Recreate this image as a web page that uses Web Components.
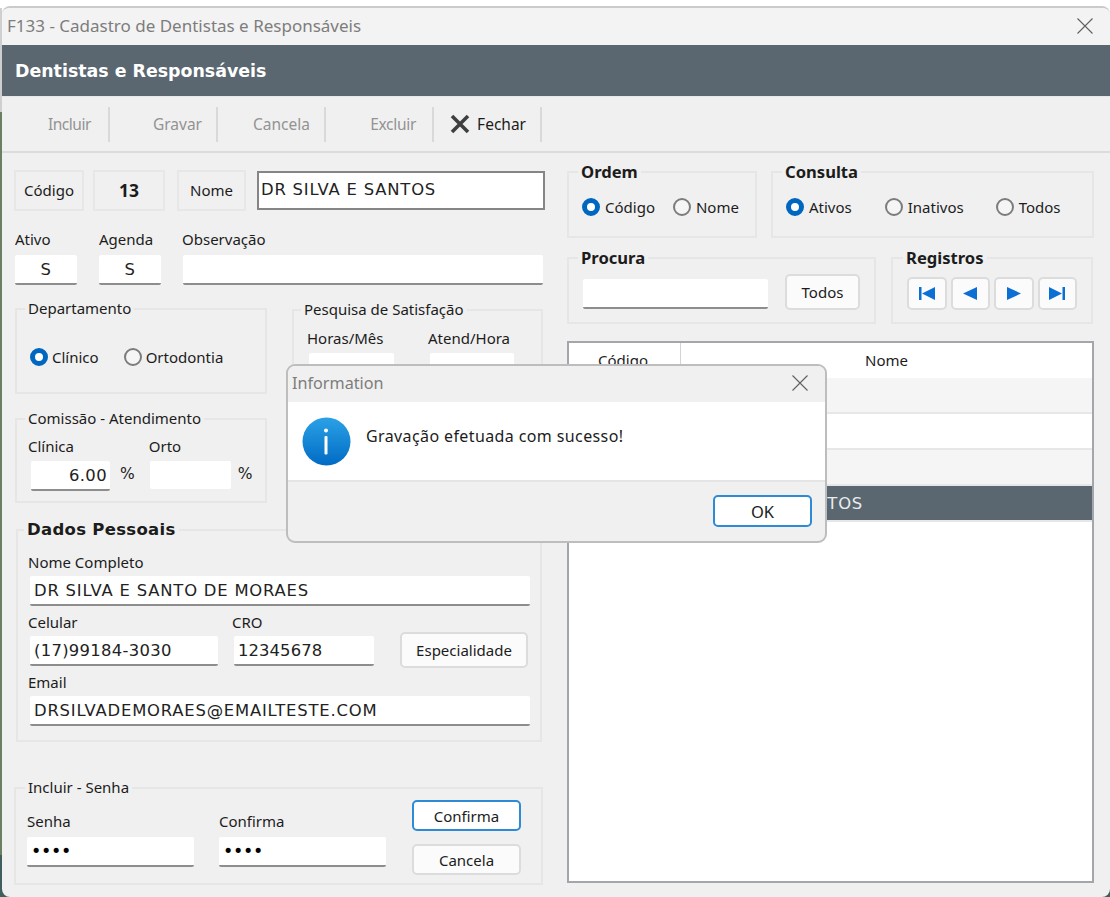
<!DOCTYPE html>
<html lang="pt">
<head>
<meta charset="utf-8">
<title>F133</title>
<style>
    html, body { margin: 0; height: 897px; overflow: hidden; }
    body {
        background:
            linear-gradient(#fff 8px, #cfcfcf 8px, #cfcfcf 112px, #6b8062 112px, #6b8062 855px, #3f5f5e 855px) 0 0 / 2px 100% no-repeat,
            linear-gradient(#3f5f5e, #3f5f5e) 0 100% / 100% 12px no-repeat,
            #fff;
        font-family: "Noto Sans", sans-serif;
    }
</style>
</head>
<body>
<x-app></x-app>
<script>
const define = (name, html, Base = HTMLElement) => {
    const template = document.createElement('template');
    template.innerHTML = html;
    customElements.define(name, class extends Base {
        constructor() {
            super();
            this.attachShadow({ mode: 'open' });
            this.shadowRoot.appendChild(template.content.cloneNode(true));
        }
        connectedCallback() {
            this.shadowRoot.querySelectorAll('[data-attr]').forEach(el => {
                el.textContent = this.getAttribute(el.dataset.attr) || '';
            });
        }
    });
};

// title bar of a window, also used by the dialog
define('x-titlebar', `<style>
    :host { display: flex; align-items: center; justify-content: space-between; box-sizing: border-box; padding-bottom: 2px; background: #f3f3f3; color: #7d7d7d; font: 16.2px "Noto Sans", sans-serif; }
    svg { display: block; }
</style>
<span data-attr="title"></span>
<svg width="16" height="16" viewBox="0 0 16 16" fill="none" stroke="#5f5f5f" stroke-width="1.1"><path d="M.5.5l15 15M15.5.5l-15 15"/></svg>`);

define('x-tool', `<style>
    :host { display: flex; align-items: center; justify-content: flex-end; box-sizing: border-box; width: 108px; height: 35px; padding: 0 14px 1px 0; border-right: 2px solid #d9d9d9; color: #939393; font: 15.5px "Noto Sans", sans-serif; }
    :host([active]) { color: #1c1c1c; }
    ::slotted(svg) { margin-right: 7px; }
</style>
<slot name="icon"></slot><slot></slot>`);

define('x-box', `<style>
    :host { display: flex; align-items: center; justify-content: center; box-sizing: border-box; height: 41px; padding-bottom: 2px; border: 2px solid #e7e7e7; color: #1c1c1c; font: 15px "Noto Sans", sans-serif; }
    :host([strong]) { font-weight: 700; font-size: 17.5px; }
</style>
<slot></slot>`);

define('x-input', `<style>
    :host { display: flex; align-items: center; box-sizing: border-box; height: 30px; padding: 0 4px; background: #fff; border-bottom: 2px solid #8d8d8d; border-radius: 2px; color: #222; font: 16.4px "DejaVu Sans", sans-serif; letter-spacing: .8px; white-space: nowrap; }
    :host([center]) { justify-content: center; }
    :host([right]) { justify-content: flex-end; padding-right: 3px; letter-spacing: .4px; }
    :host([flat]) { height: 28px; border-bottom: 0; margin-bottom: 2px; }
    :host([boxed]) { align-items: flex-start; padding: 7px 2px 0; height: 39px; border: 2px solid #858585; border-radius: 0; }
    :host([secret]) { color: #000; font-size: 17.5px; letter-spacing: -.3px; }
</style>
<slot></slot>`);

define('x-field', `<style>
    :host { display: flex; flex-direction: column; gap: var(--gap, 4px); }
    span { height: 18px; color: #1c1c1c; font: 15px/16px "Noto Sans", sans-serif; white-space: nowrap; }
    ::slotted(x-input) { margin-left: var(--inset, 0); }
</style>
<span data-attr="label"></span>
<slot></slot>`);

define('x-group', `<style>
    :host { display: block; box-sizing: border-box; }
    fieldset { box-sizing: border-box; height: 100%; min-width: 0; margin: 0; padding: var(--pad, 0 12px); border: 2px solid #e6e6e6; }
    legend { height: 18px; margin-left: var(--legend-x, -3px); padding: 0 3px; color: #1c1c1c; font: 15px/16px "Noto Sans", sans-serif; white-space: nowrap; }
    :host([strong]) legend { font: 700 16.6px/18px "Noto Sans", sans-serif; }
    :host([wide]) legend { font: 700 16.5px/18px "DejaVu Sans", sans-serif; letter-spacing: .3px; }
</style>
<fieldset><legend data-attr="legend"></legend><slot></slot></fieldset>`);

define('x-radio', `<style>
    :host { display: inline-flex; align-items: center; gap: var(--radio-gap, 5px); height: 20px; color: #1c1c1c; font: 15px "Noto Sans", sans-serif; white-space: nowrap; }
    i { box-sizing: border-box; width: 18px; height: 18px; border: 2px solid #7c7c7c; border-radius: 50%; background: #f5f5f5; }
    :host([checked]) i { border: 5px solid #0067c0; background: #fff; }
</style>
<i></i><slot></slot>`);

define('x-btn', `<style>
    :host { display: flex; align-items: center; justify-content: center; box-sizing: border-box; height: 31px; background: #fbfbfb; border: 2px solid #dcdcdc; border-radius: 5px; color: #1c1c1c; font: 15px "Noto Sans", sans-serif; white-space: nowrap; }
    :host([focus]) { background: #fff; border-color: #2f8ad6; }
</style>
<slot></slot>`);

define('x-row', `<style>
    :host { display: grid; grid-template-columns: 111px 1fr; align-items: center; box-sizing: border-box; height: 36px; border-bottom: 2px solid #e7e7e7; background: #fff; color: #222; font: 16.4px "DejaVu Sans", sans-serif; letter-spacing: .8px; }
    :host([alt]) { background: #f5f5f5; }
    :host([selected]) { background: #5a6770; color: #e9ecee; }
    span { padding-left: 8px; white-space: nowrap; }
    span:first-child { padding: 0; text-align: center; }
</style>
<span data-attr="code"></span><span data-attr="name"></span>`);

define('x-grid', `<style>
    :host { display: block; box-sizing: border-box; border: 2px solid #a3a7ab; background: #fff; }
    header { display: grid; grid-template-columns: 111px 1fr; height: 35px; color: #1c1c1c; font: 15px/35px "Noto Sans", sans-serif; text-align: center; }
    header span:first-child { padding-right: 3px; }
    header span + span { border-left: 1px solid #d4d4d4; }
</style>
<header><span>Código</span><span>Nome</span></header>
<slot></slot>`);

define('x-dialog', `<style>
    :host { display: flex; flex-direction: column; position: absolute; left: 286px; top: 364px; box-sizing: border-box; width: 541px; height: 179px; border: 2px solid #bdbdbd; border-radius: 9px; background: #f0f0f0; overflow: hidden; }
    x-titlebar { height: 36px; padding: 0 17px 2px 4px; background: #f0f0f0; }
    main { display: flex; gap: 15px; height: 80px; padding: 15px 14px 0; box-sizing: border-box; background: #fff; border-bottom: 2px solid #e4e4e4; color: #1c1c1c; font: 16px "Noto Sans", sans-serif; }
    main p { margin: 8px 0 0; letter-spacing: .39px; }
    footer { display: flex; justify-content: flex-end; padding: 13px 13px 0 0; }
</style>
<x-titlebar title="Information"></x-titlebar>
<main>
    <svg width="49" height="49" viewBox="0 0 49 49">
        <defs><linearGradient id="blue" x1="0" y1="0" x2="0" y2="1"><stop offset="0" stop-color="#2ba1e6"/><stop offset="1" stop-color="#006bc4"/></linearGradient></defs>
        <circle cx="24.5" cy="24.5" r="24" fill="url(#blue)"/>
        <circle cx="24" cy="13.5" r="2" fill="#fff"/>
        <rect x="22.5" y="19" width="3" height="18.5" rx="1" fill="#fff"/>
    </svg>
    <p><slot></slot></p>
</main>
<footer><slot name="actions"></slot></footer>`);

define('x-app', `<style>
    :host { display: block; position: relative; box-sizing: border-box; width: 1110px; height: 897px; padding-top: 6px; }
    .window { box-sizing: border-box; margin-left: 2px; width: 1108px; height: 891px; border-top: 2px solid #cbcbcb; border-radius: 8px; background: #f0f0f0; overflow: hidden; }
    .title { height: 37px; padding: 0 17px 2px 5px; font-size: 17px; }
    .head { height: 51px; padding-left: 13px; background: #5a6770; color: #fff; font: 700 17.4px/53px "DejaVu Sans", sans-serif; }
    .toolbar { display: flex; box-sizing: border-box; height: 57px; padding-top: 10px; border-top: 1px solid #e8e8e8; border-bottom: 2px solid #dcdcdc; }
    .main { display: flex; }
    .left { box-sizing: border-box; width: 565px; padding: 17px 0 0 12px; }
    .row { display: flex; }
    .r1 { align-items: flex-start; }
    .r2 { margin: 20px 0 0 1px; --gap: 6px; }
    .r3 { display: grid; grid-template-columns: 252px 251px; gap: 0 25px; margin: 15px 0 0 1px; align-items: start; }
    .stack { display: flex; flex-direction: column; gap: 16px; }
    .pct { margin: 0 0 8px 10px; color: #222; font: 15.5px "DejaVu Sans", sans-serif; }
    .right { box-sizing: border-box; width: 527px; padding-top: 10px; }
    .radios { display: flex; align-items: center; }
</style>
<div class="window">
    <x-titlebar class="title" title="F133 - Cadastro de Dentistas e Responsáveis"></x-titlebar>
    <div class="head">Dentistas e Responsáveis</div>
    <div class="toolbar">
        <x-tool style="padding-right:17px;letter-spacing:-.45px">Incluir</x-tool>
        <x-tool>Gravar</x-tool>
        <x-tool>Cancela</x-tool>
        <x-tool style="padding-right:16px;letter-spacing:-.3px">Excluir</x-tool>
        <x-tool active>
            <svg slot="icon" width="20" height="20" viewBox="0 0 20 20" fill="none" stroke="#3f3f3f" stroke-width="3.6"><path d="M2 2l16 16M18 2L2 18"/></svg>Fechar
        </x-tool>
    </div>
    <div class="main">
        <div class="left">
            <div class="row r1">
                <x-box style="width:70px">Código</x-box>
                <x-box strong style="width:72px;margin-left:9px">13</x-box>
                <x-box style="width:69px;margin-left:12px">Nome</x-box>
                <x-input boxed style="width:288px;margin:1px 0 0 11px">DR SILVA E SANTOS</x-input>
            </div>
            <div class="row r2">
                <x-field label="Ativo" style="width:62px"><x-input center>S</x-input></x-field>
                <x-field label="Agenda" style="width:62px;margin-left:22px"><x-input center>S</x-input></x-field>
                <x-field label="Observação" style="width:361px;margin-left:21px;--inset:1px"><x-input></x-input></x-field>
            </div>
            <div class="r3">
                <div class="stack">
                    <x-group legend="Departamento" style="height:94px;--pad:29px 11px 0 13px;--legend-x:-5px;--radio-gap:4px">
                        <div class="radios">
                            <x-radio checked>Clínico</x-radio>
                            <x-radio style="margin-left:25px">Ortodontia</x-radio>
                        </div>
                    </x-group>
                    <x-group legend="Comissão - Atendimento" style="height:93px;--pad:10px 11px 0 11px">
                        <div class="row" style="align-items:flex-end;--gap:5px">
                            <x-field label="Clínica" style="width:82px;--inset:3px"><x-input right>6.00</x-input></x-field>
                            <span class="pct">%</span>
                            <x-field label="Orto" style="width:82px;margin-left:14px;--inset:1px"><x-input flat></x-input></x-field>
                            <span class="pct" style="margin-left:7px">%</span>
                        </div>
                    </x-group>
                </div>
                <x-group legend="Pesquisa de Satisfação" style="height:110px;margin-top:1px;--pad:11px 12px 0 13px;--legend-x:-6px;--gap:5px">
                    <div class="row">
                        <x-field label="Horas/Mês" style="width:87px;--inset:2px"><x-input></x-input></x-field>
                        <x-field label="Atend/Hora" style="width:86px;margin-left:34px;--inset:2px"><x-input></x-input></x-field>
                    </div>
                </x-group>
            </div>
            <x-group wide legend="Dados Pessoais" style="width:526px;height:221px;margin:18px 0 0 2px;--pad:15px 10px 0 10px;--inset:2px;--legend-x:-4px">
                <x-field label="Nome Completo"><x-input style="width:500px">DR SILVA E SANTO DE MORAES</x-input></x-field>
                <div class="row" style="margin-top:8px">
                    <x-field label="Celular"><x-input style="width:188px;letter-spacing:.3px">(17)99184-3030</x-input></x-field>
                    <x-field label="CRO" style="margin-left:14px"><x-input style="width:140px;letter-spacing:.1px">12345678</x-input></x-field>
                    <x-btn style="width:128px;height:36px;margin:18px 0 -2px 26px">Especialidade</x-btn>
                </div>
                <x-field label="Email" style="margin-top:8px"><x-input style="width:500px">DRSILVADEMORAES@EMAILTESTE.COM</x-input></x-field>
            </x-group>
            <x-group legend="Incluir - Senha" style="width:529px;height:106px;margin-top:37px;--pad:3px 11px 0 11px;--gap:6px;--legend-x:-2px">
                <div class="row">
                    <x-field label="Senha" style="width:167px;margin-top:13px"><x-input secret>••••</x-input></x-field>
                    <x-field label="Confirma" style="width:167px;margin:13px 0 0 25px"><x-input secret>••••</x-input></x-field>
                    <div class="stack" style="gap:13px;margin-left:26px">
                        <x-btn focus style="width:109px">Confirma</x-btn>
                        <x-btn style="width:109px">Cancela</x-btn>
                    </div>
                </div>
            </x-group>
        </div>
        <div class="right">
            <div class="row" style="gap:14px">
                <x-group strong legend="Ordem" style="width:190px;height:75px;--pad:16px 12px 0">
                    <div class="radios" style="margin-left:1px">
                        <x-radio checked>Código</x-radio>
                        <x-radio style="margin-left:18px">Nome</x-radio>
                    </div>
                </x-group>
                <x-group strong legend="Consulta" style="width:323px;height:75px;--pad:16px 12px 0">
                    <div class="radios" style="margin-left:1px">
                        <x-radio checked>Ativos</x-radio>
                        <x-radio style="margin-left:33px">Inativos</x-radio>
                        <x-radio style="margin-left:32px">Todos</x-radio>
                    </div>
                </x-group>
            </div>
            <div class="row" style="gap:15px;margin-top:11px">
                <x-group strong legend="Procura" style="width:309px;height:75px;--pad:4px 12px 0">
                    <div class="row" style="margin-left:2px">
                        <x-input style="width:185px;margin-top:8px"></x-input>
                        <x-btn style="width:75px;height:36px;margin:3px 0 0 17px">Todos</x-btn>
                    </div>
                </x-group>
                <x-group strong legend="Registros" style="width:202px;height:75px;--pad:10px 14px 0;--legend-x:-4px">
                    <div class="row" style="gap:4px">
                        <x-btn style="width:40px;height:33px"><svg width="16" height="13" viewBox="0 0 16 13" fill="#0b6fd4"><path d="M0 0h2.500v13H0zM16 0v13L3 6.500z"/></svg></x-btn>
                        <x-btn style="width:40px;height:33px"><svg width="14" height="13" viewBox="0 0 14 13" fill="#0b6fd4"><path d="M14 0v13L0 6.500z"/></svg></x-btn>
                        <x-btn style="width:40px;height:33px"><svg width="14" height="13" viewBox="0 0 14 13" fill="#0b6fd4"><path d="M0 0v13l14-6.500z"/></svg></x-btn>
                        <x-btn style="width:40px;height:33px"><svg width="16" height="13" viewBox="0 0 16 13" fill="#0b6fd4"><path d="M0 0v13l13-6.500zM13.500 0H16v13h-2.500z"/></svg></x-btn>
                    </div>
                </x-group>
            </div>
            <x-grid style="height:542px;margin-top:17px">
                <x-row alt></x-row>
                <x-row></x-row>
                <x-row alt></x-row>
                <x-row selected code="13" name="DR SILVA E SANTOS"></x-row>
            </x-grid>
        </div>
    </div>
</div>
<x-dialog>
    Gravação efetuada com sucesso!
    <x-btn slot="actions" focus style="width:99px;height:32px;font-size:16.5px">OK</x-btn>
</x-dialog>`);
</script>
</body>
</html>
